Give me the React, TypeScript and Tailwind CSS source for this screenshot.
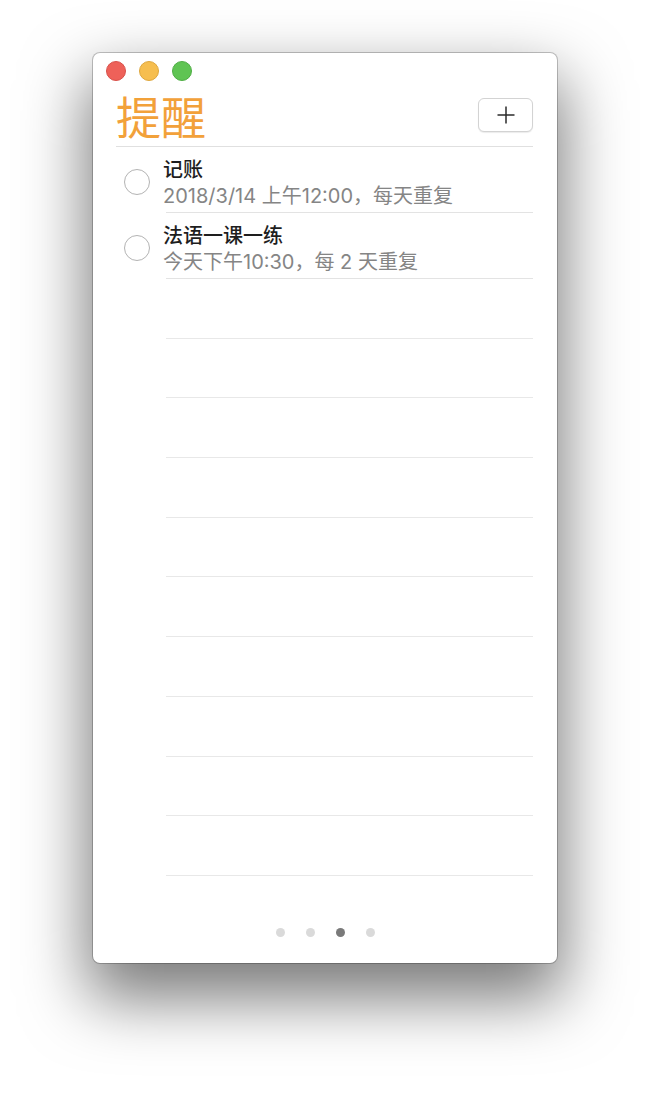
import React from "react";

const reminders = [
  { title: "记账", note: "2018/3/14 上午12:00，每天重复" },
  { title: "法语一课一练", note: "今天下午10:30，每 2 天重复" },
];

const emptyRows = Array.from({ length: 10 });

export default function App() {
  return (
    <div
      className="w-[650px] h-[1096px] bg-white pt-[53px] pl-[93px] overflow-hidden"
      style={{ fontFamily: 'Inter, "Noto Sans CJK SC", sans-serif' }}
    >
      {/* window */}
      <div className="w-[464px] h-[910px] bg-white rounded-[7px] flex flex-col shadow-[0_0_0_1px_rgba(0,0,0,0.22),0_30px_64px_6px_rgba(0,0,0,0.52)]">
        {/* traffic lights */}
        <div className="flex gap-[13px] pl-[13px] pt-[8px]">
          <span className="w-[20px] h-[20px] rounded-full bg-[#ee6159] border border-[#d8504a]" />
          <span className="w-[20px] h-[20px] rounded-full bg-[#f6be4f] border border-[#dea73d]" />
          <span className="w-[20px] h-[20px] rounded-full bg-[#5fc453] border border-[#4fae45]" />
        </div>

        {/* header */}
        <div className="flex items-center justify-between mt-[14px] h-[40px] pl-[23px] pr-[24px]">
          <h1 className="text-[45px] leading-[45px] text-[#f2a13a] font-normal" style={{ fontFamily: '"Noto Sans CJK SC", sans-serif' }}>
            提醒
          </h1>
          <button className="w-[55px] h-[34px] rounded-[6px] border border-[#d3d3d3] bg-white shadow-[0_1px_1px_rgba(0,0,0,0.08)] flex items-center justify-center">
            <svg width="20" height="20" viewBox="0 0 20 20">
              <path d="M10 1.5V18.5M1.5 10H18.5" stroke="#2b2b2b" strokeWidth="1.5" />
            </svg>
          </button>
        </div>
        <div className="mt-[11px] ml-[23px] mr-[24px] h-px bg-[#e0e0e0]" />

        {/* reminders */}
        {reminders.map((r) => (
          <div key={r.title} className="flex h-[66px]">
            <div className="w-[73px] shrink-0 pl-[31px] pt-[22px]">
              <div className="w-[26px] h-[26px] rounded-full border-[1.5px] border-[#b3b3b3]" />
            </div>
            <div className="flex-1 mr-[24px] border-b border-[#e3e3e3] pt-[10px]">
              <div className="-ml-[3px] text-[20px] leading-[26px] font-medium text-[#1e1e1e]">{r.title}</div>
              <div className="-ml-[3px] text-[20px] leading-[26px] text-[#858585]">{r.note}</div>
            </div>
          </div>
        ))}

        {/* empty lines */}
        {emptyRows.map((_, i) => (
          <div key={i} className="h-[59.7px] ml-[73px] mr-[24px] border-b border-[#e8e8e8] shrink-0" />
        ))}

        {/* page dots */}
        <div className="flex justify-center gap-[21px] mt-[52px]">
          <span className="w-[9px] h-[9px] rounded-full bg-[#dadada]" />
          <span className="w-[9px] h-[9px] rounded-full bg-[#dadada]" />
          <span className="w-[9px] h-[9px] rounded-full bg-[#7a7a7a]" />
          <span className="w-[9px] h-[9px] rounded-full bg-[#dadada]" />
        </div>
      </div>
    </div>
  );
}
